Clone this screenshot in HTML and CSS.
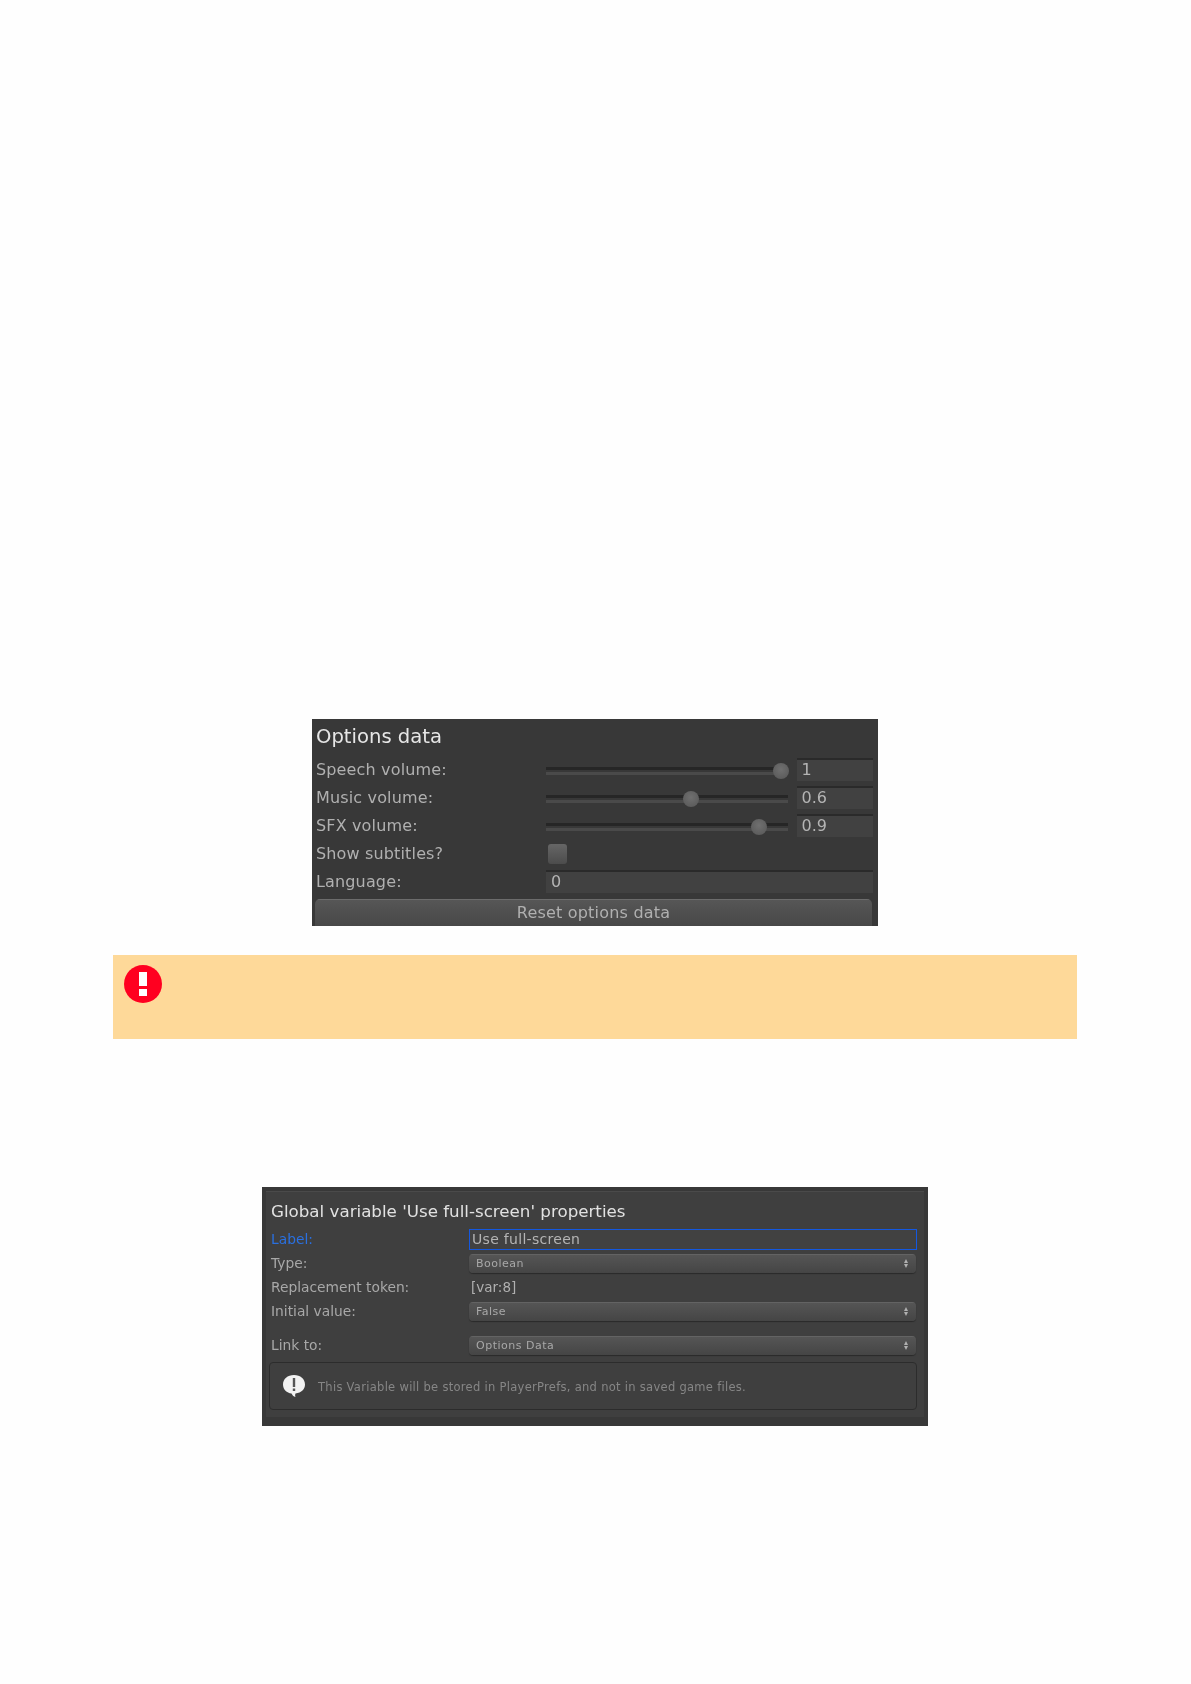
FILE: index.html
```html
<!DOCTYPE html>
<html lang="en">
<head>
    <meta charset="UTF-8">
    <meta name="viewport" content="width=device-width, initial-scale=1.0">
    <title>Options data</title>

    <link rel="stylesheet" href="styles.css">
</head>
<body>
    <div class="options-panel">
        <h2>Options data</h2>

        <div class="opt-row">
            <span class="opt-label">Speech volume:</span>
            <div class="slider"><span class="thumb" style="--v:1"></span></div>
            <div class="num-field">1</div>
        </div>
        <div class="opt-row">
            <span class="opt-label">Music volume:</span>
            <div class="slider"><span class="thumb" style="--v:0.6"></span></div>
            <div class="num-field">0.6</div>
        </div>
        <div class="opt-row">
            <span class="opt-label">SFX volume:</span>
            <div class="slider"><span class="thumb" style="--v:0.9"></span></div>
            <div class="num-field">0.9</div>
        </div>
        <div class="opt-row">
            <span class="opt-label">Show subtitles?</span>
            <div class="checkbox"></div>
        </div>
        <div class="opt-row">
            <span class="opt-label">Language:</span>
            <div class="num-field wide">0</div>
        </div>

        <div class="reset-btn">Reset options data</div>
    </div>

    <div class="warning">
        <svg class="warning-icon" viewBox="0 0 38 38" width="38" height="38">
            <circle cx="19" cy="19" r="19" fill="#ff0020"/>
            <rect x="15" y="7" width="8" height="14" fill="#fff"/>
            <rect x="15" y="24" width="8" height="7" fill="#fff"/>
        </svg>
    </div>

    <div class="var-panel">
        <div class="var-inner">
            <h3>Global variable 'Use full-screen' properties</h3>

            <div class="var-row focused">
                <span class="var-label">Label:</span>
                <div class="text-field">Use full-screen</div>
            </div>
            <div class="var-row">
                <span class="var-label">Type:</span>
                <div class="select">Boolean<span class="arrows"></span></div>
            </div>
            <div class="var-row">
                <span class="var-label">Replacement token:</span>
                <span class="token">[var:8]</span>
            </div>
            <div class="var-row">
                <span class="var-label">Initial value:</span>
                <div class="select">False<span class="arrows"></span></div>
            </div>
            <div class="var-row link-row">
                <span class="var-label">Link to:</span>
                <div class="select">Options Data<span class="arrows"></span></div>
            </div>

            <div class="help-box">
                <svg class="help-icon" viewBox="0 0 26 26" width="26" height="26">
                    <path d="M13 2C6.500 2 2 5.900 2 11.500C2 16.500 5.800 20 10.500 20.500C11.200 22 12.500 23.500 14.500 24C14 22.800 14 21.500 14.500 20.400C20.500 19.800 24 16 24 11.500C24 5.900 19.500 2 13 2Z" fill="#f2f2f2"/>
                    <rect x="11.800" y="5" width="2.400" height="9" fill="#555"/>
                    <rect x="11.800" y="15.500" width="2.400" height="2.500" fill="#555"/>
                </svg>
                <span class="help-text">This Variable will be stored in PlayerPrefs, and not in saved game files.</span>
            </div>
        </div>
    </div>
</body>
</html>
```

FILE: styles.css
```css
/* General Styles */
body {
    margin: 0;
    padding-top: 719px;
    background: #fefefe;
    font-family: "DejaVu Sans", sans-serif;
    min-height: 965px;
}

/* Options Panel */
.options-panel {
    width: 566px;
    height: 207px;
    margin-left: 312px;
    box-sizing: border-box;
    padding: 0 5px 0 3px;
    background: #383838;
    color: #b4b4b4;
    overflow: hidden;
    filter: blur(0.6px);
}

.options-panel h2 {
    margin: 0;
    height: 36px;
    padding-left: 1px;
    font-size: 19.600px;
    line-height: 35px;
    font-weight: normal;
    color: #e6e6e6;
}

.opt-row {
    display: flex;
    align-items: center;
    height: 28px;
}

.opt-label {
    width: 230px;
    padding-left: 1px;
    font-size: 16px;
    letter-spacing: 0.15px;
    color: #b0b0b0;
    flex-shrink: 0;
}

/* Sliders */
.slider {
    position: relative;
    width: 244px;
    height: 8px;
    margin-top: 4px;
    background: linear-gradient(#262626 0 3px, #383838 3px 5px, #4a4a4a 5px);
}

.thumb {
    position: absolute;
    top: -4px;
    left: calc(var(--v) * 93% + 2px);
    width: 16px;
    height: 16px;
    border-radius: 50%;
    background: radial-gradient(circle at 50% 40%, #707070, #565656);
}

.num-field {
    width: 76px;
    height: 23px;
    margin-left: 9px;
    padding-left: 4px;
    box-sizing: border-box;
    background: #414141;
    border-top: 2px solid #2a2a2a;
    font-size: 16px;
    line-height: 20px;
    color: #b4b4b4;
}

.num-field.wide {
    width: 328px;
    margin-left: 0;
    padding-left: 5px;
}

.checkbox {
    width: 19px;
    height: 20px;
    margin-left: 2px;
    margin-top: 2px;
    border-radius: 3px;
    background: linear-gradient(#666, #4c4c4c);
}

/* Reset Button */
.reset-btn {
    height: 32px;
    margin: 4px 1px 0 0;
    border-radius: 5px 5px 0 0;
    background: linear-gradient(#6c6c6c 0 1px, #565656 1px, #454545);
    text-align: center;
    font-size: 16px;
    line-height: 27px;
    letter-spacing: 0.2px;
    color: #b0b0b0;
}

/* Warning Box */
.warning {
    width: 964px;
    height: 84px;
    margin: 29px 0 0 113px;
    padding: 10px 11px;
    box-sizing: border-box;
    background: #fed999;
}

.warning-icon {
    display: block;
}

/* Variable Panel */
.var-panel {
    width: 666px;
    height: 239px;
    margin: 148px 0 0 262px;
    box-sizing: border-box;
    padding: 4px;
    background: #383838;
    color: #a8a8a8;
    filter: blur(0.5px);
}

.var-inner {
    height: 226px;
    box-sizing: border-box;
    padding: 0 7px 0 5px;
    background: #3f3f3f;
    border-top: 1px solid #4a4a4a;
}

.var-inner h3 {
    margin: 0;
    height: 37px;
    margin-bottom: -2px;
    font-size: 16.700px;
    line-height: 38px;
    font-weight: normal;
    color: #e2e2e2;
}

.var-row {
    display: flex;
    align-items: center;
    height: 24px;
}

.var-label {
    width: 198px;
    flex-shrink: 0;
    font-size: 13.800px;
    color: #a8a8a8;
}

.focused .var-label {
    color: #2a70e0;
}

.text-field {
    flex: 1;
    height: 21px;
    box-sizing: border-box;
    padding-left: 2px;
    border: 1px solid #1458e0;
    background: #414141;
    font-size: 14px;
    line-height: 19px;
    letter-spacing: 0.3px;
    color: #b4b4b4;
}

.select {
    position: relative;
    flex: 1;
    height: 19px;
    margin-right: 1px;
    padding-left: 7px;
    border-radius: 4px;
    background: linear-gradient(#636363 0 1px, #555 1px, #454545);
    box-shadow: 0 1px 1px #2a2a2a;
    font-size: 11px;
    line-height: 19px;
    letter-spacing: 0.5px;
    color: #a8a8a8;
}

/* Up/down arrows on a select */
.arrows {
    position: absolute;
    right: 7px;
    top: 5px;
    width: 5px;
    height: 9px;
}

.arrows::before,
.arrows::after {
    content: "";
    position: absolute;
    left: 0;
    border-left: 2.500px solid transparent;
    border-right: 2.500px solid transparent;
}

.arrows::before {
    top: 0;
    border-bottom: 4px solid #b0b0b0;
}

.arrows::after {
    bottom: 0;
    border-top: 4px solid #b0b0b0;
}

.token {
    padding-left: 2px;
    font-size: 13.500px;
    color: #b0b0b0;
}

.link-row {
    margin-top: 10px;
}

/* Help Box */
.help-box {
    display: flex;
    align-items: center;
    gap: 11px;
    height: 48px;
    margin: 5px 0 0 -2px;
    padding-left: 11px;
    box-sizing: border-box;
    border: 1px solid #2c2c2c;
    border-radius: 4px;
    font-size: 11.500px;
    letter-spacing: 0.290px;
    color: #868686;
}

.help-icon {
    flex-shrink: 0;
}

.help-text {
    padding-top: 2px;
}
```
